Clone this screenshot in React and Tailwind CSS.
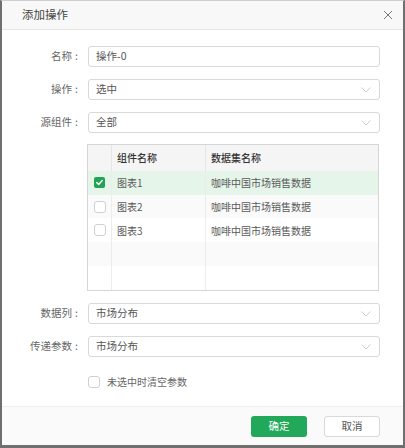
import React from "react";

const font = { fontFamily: '"Noto Sans CJK SC", "Noto Sans", sans-serif' };

function Chevron() {
  return (
    <svg width="10" height="6" viewBox="0 0 10 6" className="absolute right-[8px] top-[7px]">
      <path d="M0.5 0.5 L5 5 L9.5 0.5" fill="none" stroke="#c8c8c8" strokeWidth="0.9" />
    </svg>
  );
}

function Row({ label, value, select }) {
  return (
    <div className="flex items-center h-[20px]">
      <div className="w-[78px] text-right text-[10.5px] text-[#666] leading-[20px] whitespace-nowrap">
        {label}
        <span className="ml-[3px] mr-[2px]">:</span>
      </div>
      <div className="ml-[8px] relative w-[292px] h-[21px] border border-[#d9d9d9] rounded-[3px] bg-white flex items-center px-[7px] text-[10.5px] text-[#555]">
        {value}
        {select && <Chevron />}
      </div>
    </div>
  );
}

function Check({ checked }) {
  if (checked)
    return (
      <div className="w-[11px] h-[11px] rounded-[2px] bg-[#21a453] flex items-center justify-center">
        <svg width="9" height="9" viewBox="0 0 9 9">
          <path d="M1.8 4.6 L3.7 6.4 L7.2 2.6" fill="none" stroke="white" strokeWidth="1.5" strokeLinecap="round" strokeLinejoin="round" />
        </svg>
      </div>
    );
  return <div className="w-[12px] h-[12px] rounded-[3px] border border-[#cfcfcf] bg-white" />;
}

export default function App() {
  const rows = [
    { name: "图表1", ds: "咖啡中国市场销售数据", checked: true, bg: "bg-[#e6f5ea]" },
    { name: "图表2", ds: "咖啡中国市场销售数据", bg: "bg-[#fafafa]" },
    { name: "图表3", ds: "咖啡中国市场销售数据", bg: "bg-white" },
    { name: "", ds: "", empty: true, bg: "bg-[#fafafa]" },
    { name: "", ds: "", empty: true, bg: "bg-white" },
  ];
  return (
    <div style={font} className="w-[405px] h-[448px] flex flex-col bg-white border-l-2 border-r-2 border-b-[3px] border-t border-l-[#6f6f6f] border-r-[#6f6f6f] border-b-[#6f6f6f] border-t-[#cfcfcf]">
      <div className="h-[29px] shrink-0 flex items-center justify-between bg-[#f8f8f8] border-b border-[#e6e6e6] pl-[20px] pr-[10px]">
        <span className="text-[11.5px] text-[#444]">添加操作</span>
        <svg width="10" height="10" viewBox="0 0 10 10">
          <path d="M1 1 L9 9 M9 1 L1 9" stroke="#777" strokeWidth="1" />
        </svg>
      </div>
      <div className="flex-1 flex flex-col pt-[16px]">
        <div className="flex flex-col gap-[13px]">
          <Row label="名称" value="操作-0" />
          <Row label="操作" value="选中" select />
          <Row label="源组件" value="全部" select />
        </div>
        <div className="ml-[85px] mt-[12px] w-[292px] h-[147px] border border-[#d6d6d6] flex flex-col text-[10px]">
          <div className="h-[26px] flex bg-[#f5f5f5] text-[#333] font-medium">
            <div className="w-[24px] border-r border-[#e6e6e6]" />
            <div className="w-[94px] border-r border-[#e6e6e6] pl-[5px] flex items-center">组件名称</div>
            <div className="flex-1 pl-[5px] flex items-center">数据集名称</div>
          </div>
          {rows.map((r, i) => (
            <div key={i} className={`h-[24px] flex ${r.bg} text-[#5a5a5a]`}>
              <div className="w-[24px] border-r border-[#ececec] flex items-center justify-center">
                {!r.empty && <Check checked={r.checked} />}
              </div>
              <div className="w-[94px] border-r border-[#ececec] pl-[5px] flex items-center">{r.name}</div>
              <div className="flex-1 pl-[5px] flex items-center">{r.ds}</div>
            </div>
          ))}
        </div>
        <div className="flex flex-col gap-[13px] mt-[12px]">
          <Row label="数据列" value="市场分布" select />
          <Row label="传递参数" value="市场分布" select />
        </div>
        <div className="flex items-center ml-[86px] mt-[18px] gap-[7px]">
          <div className="w-[12px] h-[12px] rounded-[3px] border border-[#cfcfcf] bg-white" />
          <span className="text-[10px] text-[#666]">未选中时清空参数</span>
        </div>
      </div>
      <div className="h-[39px] shrink-0 bg-[#fafafa] border-t border-[#efefef] flex items-center justify-end pr-[23px] gap-[17px]">
        <div className="w-[56px] h-[21px] rounded-[3px] bg-[#21a858] text-white text-[10.5px] flex items-center justify-center">确定</div>
        <div className="w-[56px] h-[21px] rounded-[3px] bg-white border border-[#d9d9d9] text-[#555] text-[10.5px] flex items-center justify-center">取消</div>
      </div>
    </div>
  );
}
